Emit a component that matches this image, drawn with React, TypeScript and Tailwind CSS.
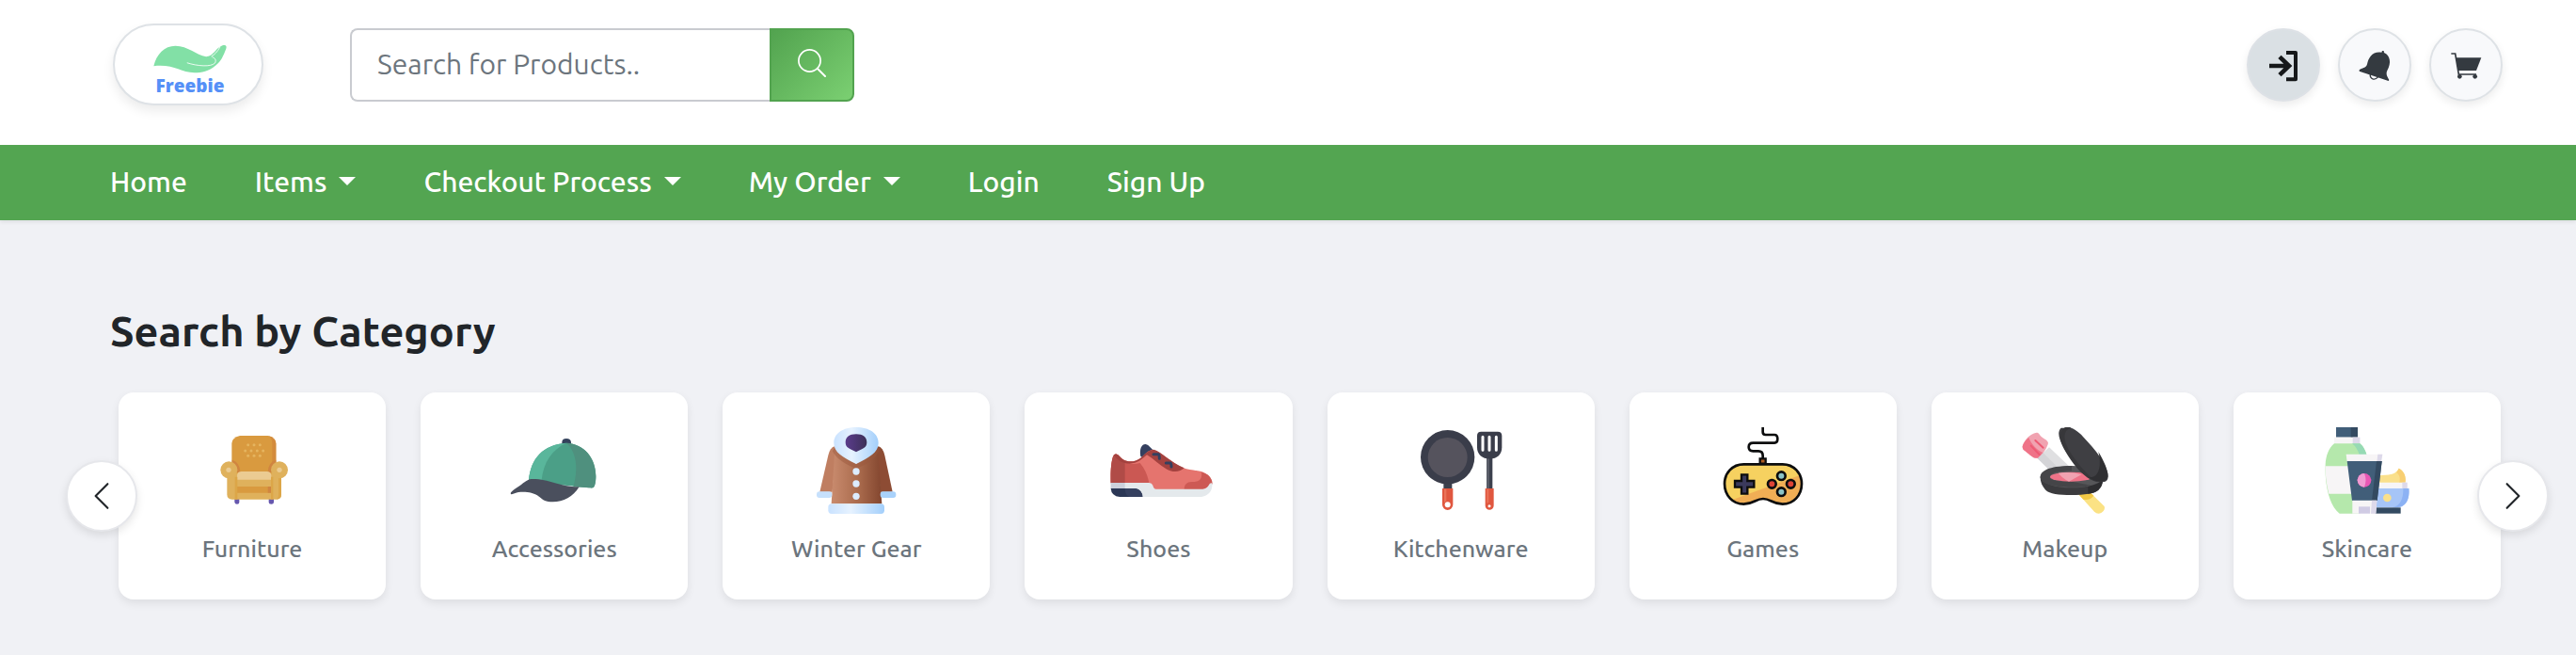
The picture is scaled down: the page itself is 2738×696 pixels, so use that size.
import type { ReactNode } from "react";
import { BsChevronLeft, BsChevronRight } from "react-icons/bs";

const navLinks = [
  { label: "Home", menu: false },
  { label: "Items", menu: true },
  { label: "Checkout Process", menu: true },
  { label: "My Order", menu: true },
  { label: "Login", menu: false },
  { label: "Sign Up", menu: false },
];

function Art({ viewBox, children }: { viewBox: string; children: ReactNode }) {
  return (
    <svg viewBox={viewBox} className="h-[92px] w-[120px]" aria-hidden="true">
      {children}
    </svg>
  );
}

function Armchair() {
  return (
    <Art viewBox="-34 42 360 276">
      <path d="M90 266h15v15q0 6-7 6t-8-6zM199 266h16v15q0 6-8 6t-8-6z" fill="#6657ad" />
      <path d="M107 69h90q25 7 25 24v110H81V93q0-17 26-24z" fill="#d99a3f" />
      <path d="M197 69q25 7 25 24v90h-12V92q0-16-13-23z" fill="#d38b3d" />
      <path d="M82 146q26 8 26 40H82zM222 146q-26 8-26 40h26z" fill="#d08540" />
      <g fill="#e5b45f">
        <circle cx="133" cy="98" r="4.500" /><circle cx="152" cy="98" r="4.500" /><circle cx="171" cy="98" r="4.500" />
        <circle cx="124" cy="117" r="4.500" /><circle cx="143" cy="117" r="4.500" /><circle cx="162" cy="117" r="4.500" /><circle cx="181" cy="117" r="4.500" />
        <circle cx="133" cy="133" r="4.500" /><circle cx="152" cy="133" r="4.500" /><circle cx="171" cy="133" r="4.500" />
      </g>
      <path d="M66 190h173v66q0 16-16 16H82q-16 0-16-16z" fill="#dfb15c" />
      <path d="M98 231h108v20H98z" fill="#d99a3f" />
      <path d="M196 231h10v20h-10z" fill="#d08540" />
      <path d="M98 209v-12q0-14 14-14h81q14 0 14 14v12z" fill="#ebcb92" />
      <path d="M91 200h8v72h-8zM206 200h7v72h-7zM230 200h9v56q0 16-16 16 7-4 7-16z" fill="#dca648" />
      <circle cx="72" cy="178" r="27" fill="#dfb15c" />
      <circle cx="233" cy="178" r="27" fill="#dfb15c" />
      <path d="M82 153a27 27 0 0 1-16 52 27 27 0 0 0 16-52zM243 153a27 27 0 0 1-16 52 27 27 0 0 0 16-52z" fill="#dca648" />
      <circle cx="71" cy="178" r="8" fill="#ebcb92" />
      <circle cx="233" cy="178" r="8" fill="#ebcb92" />
    </Art>
  );
}

function Cap() {
  return (
    <Art viewBox="-1 12 360 276">
      <path d="M204 68v-8q0-12 14-12t15 12v8z" fill="#34425c" />
      <path d="M98 181C104 112 143 67 218 62c57 3 94 48 94 106 0 14-2 28-6 34-3 5-10 3-16 3L98 186z" fill="#4b9f87" />
      <path d="M98 181C104 112 143 67 218 62c-45 20-74 63-79 118l-1 8z" fill="#59b69b" />
      <path d="M218 62c57 3 94 48 94 106 0 14-2 28-6 34-3 5-10 3-16 3l-50-3c16-55 12-110-22-140z" fill="#4f907e" />
      <path d="M40 223c1-8 22-20 35-29 15-11 22-17 36-17 53 0 80 24 148 25-20 32-50 48-84 48-24 0-30-6-44-17-20-15-45-16-66-14-13 2-20 8-23 7z" fill="#4a4f5d" />
    </Art>
  );
}

function Coat() {
  return (
    <Art viewBox="1 42 360 276">
      <defs>
        <linearGradient id="coatBody" x1="0" x2="1"><stop offset="0" stopColor="#c98b6e" /><stop offset="0.55" stopColor="#a96a4c" /><stop offset="1" stopColor="#83462f" /></linearGradient>
        <linearGradient id="coatFur" x1="0" x2="1"><stop offset="0" stopColor="#c9e2ff" /><stop offset="0.4" stopColor="#e6f2ff" /><stop offset="1" stopColor="#a3cffb" /></linearGradient>
        <linearGradient id="coatHood" x1="0" x2="1"><stop offset="0" stopColor="#5b3c8c" /><stop offset="1" stopColor="#3c3058" /></linearGradient>
      </defs>
      <path d="M112 103q-14 4-20 28L65 248h40l14-140z" fill="#bf7e61" />
      <path d="M252 103q14 4 20 28l25 117h-38l-16-140z" fill="#8d4c34" />
      <path d="M113 110l68 48 69-48 13 176H102z" fill="url(#coatBody)" />
      <path d="M106 118q14 32 75 56 56-22 74-56l-6-14-68 54-68-54z" fill="#9a573c" opacity=".45" />
      <rect x="55" y="247" width="49" height="20" rx="9" fill="#c6e0fc" />
      <rect x="258" y="247" width="50" height="20" rx="9" fill="#a9d2fb" />
      <rect x="92" y="286" width="179" height="32" rx="11" fill="url(#coatFur)" />
      <path d="M181 42c42 0 71 20 71 50 0 31-29 45-71 67-42-22-71-36-71-67 0-30 29-50 71-50z" fill="url(#coatFur)" />
      <path d="M181 64c22 0 34 10 34 26 0 18-14 20-34 31-20-11-34-13-34-31 0-16 12-26 34-26z" fill="url(#coatHood)" />
      <g fill="#dcecff"><circle cx="181" cy="183" r="11" /><circle cx="181" cy="222" r="11" /><circle cx="181" cy="262" r="11" /></g>
    </Art>
  );
}

function Shoe() {
  return (
    <Art viewBox="34 12 360 276">
      <path d="M158 105c-5-26 5-40 16-39 12 2 15 14 30 23l-24 28z" fill="#35405f" />
      <path d="M63 190c-1-40 1-65 7-84 3-10 12-11 18-4 22 26 50 22 70 8 15-12 22-25 40-27 25 6 52 38 95 58 24 9 52 8 70 17 15 8 22 20 23 34l-30 24H198z" fill="#e5746e" />
      <path d="M63 190c-1-40 1-65 7-84l20 4c20 20 42 22 66 16 18 22 25 42 29 64l12 16z" fill="#cb5853" />
      <path d="M63 190c-1-40 1-65 7-84 3-10 12-11 18-4l20 20v68z" fill="#b04b47" />
      <path d="M72 100q8-6 16 2c22 26 50 22 70 8 15-12 22-25 42-27 26 8 52 40 97 59-12 12-34 16-55 4-24-13-42-33-64-46-17 14-30 28-55 28-22 0-39-10-51-28z" fill="#a4423f" />
      <path d="M352 155q34 8 35 38l-30 18h-60c0-16 8-25 25-25 22 0 33-6 30-31z" fill="#cd5954" />
      <path d="M63 189h122q9 0 12 8 3 12 10 12h149q14-2 19-12 4-9 11-7c3 28-17 44-42 44H92q-26 0-29-26z" fill="#e4e9ec" />
      <path d="M63 189h45v19H63z" fill="#ccd1dc" />
      <path d="M63 207h78q22 4 23 27H92q-27-2-29-27z" fill="#2b3755" />
      <path d="M108 207h33q22 4 23 27h-42q-14-6-14-27z" fill="#35405f" />
      <path d="M199 98h16q3 0 3 14M239 126h14q3 0 3 12" fill="none" stroke="#35405f" strokeWidth="9" strokeLinecap="round" />
    </Art>
  );
}

function Kitchenware() {
  return (
    <Art viewBox="7 42 360 276">
      <path d="M131 215h27v28h-27zM268 138h19v102h-19z" fill="#3c404d" />
      <path d="M268 140h9v98h-9z" fill="#595c68" />
      <circle cx="144" cy="137" r="86" fill="#3a3d4a" />
      <circle cx="144" cy="138" r="63" fill="#55535d" />
      <path d="M127 237h34v52a17 17 0 0 1-34 0zM264 237h27v55a13.500 13.500 0 0 1-27 0z" fill="#e0573f" />
      <path d="M133 239h7v38q-7 4-7 8zM269 239h6v42l-6 3z" fill="#ea7359" />
      <circle cx="144" cy="289" r="9" fill="#fff" />
      <circle cx="277" cy="293" r="4.500" fill="#fff" />
      <path d="M251 56h53q13 0 13 13v37c0 22-14 37-39 37s-40-15-40-37V69q0-13 13-13z" fill="#3a3d4a" />
      <path d="M256 73v42M277 73v42M299 73v42" stroke="#fff" strokeWidth="9" strokeLinecap="round" />
    </Art>
  );
}

function Gamepad() {
  return (
    <Art viewBox="10 42 360 276">
      <defs><clipPath id="padShape"><path d="M128 160h124c36 0 61 28 61 62 0 38-27 65-61 65-32 0-38-17-62-17s-30 17-62 17c-34 0-61-27-61-65 0-34 25-62 61-62z" /></clipPath></defs>
      <path d="M189 40v17q0 9 9 9h28q10 0 10 13t-10 13h-68q-14 0-14 13t14 13h17q14 0 14 14v12" fill="none" stroke="#0c0d0e" strokeWidth="8" />
      <g clipPath="url(#padShape)">
        <path d="M60 150h260v145H60z" fill="#f6d160" />
        <path d="M68 282L315 192v110H68z" fill="#f0ae55" />
      </g>
      <path d="M128 160h124c36 0 61 28 61 62 0 38-27 65-61 65-32 0-38-17-62-17s-30 17-62 17c-34 0-61-27-61-65 0-34 25-62 61-62z" fill="none" stroke="#0c0d0e" strokeWidth="8" />
      <path d="M180 142h18v16h-18z" fill="#b05c22" stroke="#0c0d0e" strokeWidth="7" />
      <path d="M121 193h19v20h21v20h-21v21h-19v-21h-21v-20h21z" fill="#3b3a5c" stroke="#0c0d0e" strokeWidth="7" />
      <g stroke="#0c0d0e" strokeWidth="8">
        <circle cx="248" cy="197" r="13" fill="#8cc4c6" /><circle cx="248" cy="248" r="13" fill="#8cc4c6" />
        <circle cx="218" cy="223" r="13" fill="#dd4436" /><circle cx="278" cy="223" r="13" fill="#dd4436" />
      </g>
    </Art>
  );
}

function Makeup() {
  return (
    <Art viewBox="13 42 360 276">
      <path d="M104 140l38-34 72 68-34 40z" fill="#dfdfe1" />
      <path d="M104 140l18-18 66 66-16 18z" fill="#d4d4d7" />
      <path d="M57 103c6-20 22-40 45-44 8 0 9 7 16 14 14 10 24 14 20 24-6 18-18 32-32 42-14 3-22-8-32-15-12-10-17-10-17-21z" fill="#f1a3b1" />
      <path d="M57 103q4-16 20-28c8 20 25 40 45 48l-16 17c-14 3-22-8-32-15-12-10-17-10-17-22z" fill="#ef7388" />
      <path d="M84 101l27 28M98 84l25 23" stroke="#ee5a74" strokeWidth="6" strokeLinecap="round" />
      <path d="M236 256l50 55q10 10 22 4 14-8 10-21L269 246z" fill="#fbe284" />
      <path d="M236 256l15 16q22 4 33-12l-15-14z" fill="#f3c945" />
      <path d="M114 200c0 22 10 34 17 42 12 12 42 16 82 16 42 0 74-5 86-16 9-9 14-20 15-38z" fill="#3b3b3e" />
      <path d="M266 228q36-2 48-20c-2 18-6 26-15 34-8 7-20 10-33 12z" fill="#2d2d30" />
      <ellipse cx="214" cy="200" rx="100" ry="35" fill="#565659" />
      <path d="M114 200c2-24 40-35 100-35v16c-40 0-68 6-70 20 2 14 40 14 70 14l60 12c-30 10-158 12-160-27z" fill="#454548" />
      <ellipse cx="212" cy="200" rx="67" ry="15" fill="#ef7388" />
      <path d="M171 188q40-6 74 5l-40 22q-18-8-34-27z" fill="#f1a3b1" />
      <path d="M190 44c18-6 38 4 62 30 40 42 70 82 77 114 4 26-6 30-24 28-24 2-56-24-84-60-34-46-62-92-41-112z" fill="#3f3f43" />
      <path d="M190 44c8-4 18-3 23-1-40 14-20 62 20 112 24 30 47 55 67 61-24 0-54-24-80-58-34-46-60-94-30-114z" fill="#37373a" />
      <path d="M299 120c18 30 32 60 30 80-8 22-36 18-60 2 30 2 42-34 30-82z" fill="#2f2f32" />
    </Art>
  );
}

function Skincare() {
  return (
    <Art viewBox="46 162 360 276">
      <path d="M127 162h69v32h-69z" fill="#415e79" />
      <path d="M174 162h22v32h-22z" fill="#334a61" />
      <path d="M121 194h82v21h-82z" fill="#f7f5f6" />
      <path d="M180 194h23v21h-23z" fill="#ddd9ea" />
      <path d="M121 214h82c30 25 32 80 17 140l-16 83h-66c-35-26-48-100-45-157 2-28 10-50 28-66z" fill="#b5e8ac" />
      <path d="M178 214h25q15 12 22 38h-23q-8-26-24-38z" fill="#96dab4" />
      <path d="M93 286h90v88h-79q-12-45-11-88z" fill="#f7f5f6" />
      <path d="M258 316c38-2 58-2 69-23 20 10 24 30 20 48h-89z" fill="#fae08b" />
      <path d="M327 293c20 10 24 30 20 48h-19c4-16 3-24-8-34z" fill="#f8cf72" />
      <path d="M252 338h102v20H252z" fill="#f7f5f6" />
      <path d="M338 338h16v20h-16z" fill="#ddd9ea" />
      <path d="M250 357h109c3 32-7 60-40 61h-69z" fill="#a6c5f7" />
      <path d="M341 357h18c3 32-7 60-40 61h-14c28-4 37-30 36-61z" fill="#8cb2f4" />
      <path d="M250 418h83v19h-83z" fill="#334a61" />
      <circle cx="290" cy="387" r="13" fill="#fae08b" />
      <path d="M159 248h116l-4 24H162z" fill="#f7f5f6" />
      <path d="M260 248h15l-4 24h-14z" fill="#ddd9ea" />
      <path d="M162 270h111l-15 126h-80z" fill="#415e79" />
      <path d="M256 270h17l-15 126h-17z" fill="#334a61" />
      <path d="M179 395h78l-3 42h-75z" fill="#f7f5f6" />
      <path d="M241 395h16l-3 42h-16z" fill="#ddd9ea" />
      <path d="M199 415h36v22h-36z" fill="#d0cbe4" />
      <circle cx="217" cy="331" r="22" fill="#e857b4" />
      <path d="M217 309q9 22 0 44a22 22 0 0 1 0-44z" fill="#f09bd2" />
    </Art>
  );
}

const categories = [
  { name: "Furniture", Icon: Armchair },
  { name: "Accessories", Icon: Cap },
  { name: "Winter Gear", Icon: Coat },
  { name: "Shoes", Icon: Shoe },
  { name: "Kitchenware", Icon: Kitchenware },
  { name: "Games", Icon: Gamepad },
  { name: "Makeup", Icon: Makeup },
  { name: "Skincare", Icon: Skincare },
];

function Logo() {
  return (
    <a
      href="#"
      className="flex h-[87px] w-40 flex-col items-center rounded-[44px] border-2 border-[#dee2e6] bg-white pt-5 pl-1 shadow-[0_6px_12px_rgba(0,0,0,0.08)]"
    >
      <svg viewBox="160 98 236 92" className="h-[31px] w-[79px]" aria-hidden="true">
        <path
          d="M161 167C170 130 195 103 230 103C270 103 295 132 328 137C350 134 356 112 378 102C390 98 394 103 391 112C382 135 375 152 358 165C335 184 315 188 290 188C245 187 225 160 161 167Z"
          fill="#82e0a6"
        />
        <path d="M268 157c30 10 76 14 88 0 4-9 1-15-8-18M345 136c10-6 18-14 26-28M336 134c10-4 18-12 26-25" fill="none" stroke="#fff" strokeWidth="2.500" strokeLinecap="round" />
      </svg>
      <span className="font-['Open_Sans','Noto_Sans',sans-serif] text-[19px] leading-[26px] font-extrabold text-[#5590f7]">Freebie</span>
    </a>
  );
}

function RoundButton({ label, dark, children }: { label: string; dark?: boolean; children: ReactNode }) {
  return (
    <button
      type="button"
      aria-label={label}
      className={`flex size-[78px] items-center justify-center rounded-full border-2 shadow-[0_4px_10px_rgba(0,0,0,0.08)] ${dark ? "border-[#dde1e6] bg-[#dae0e4]" : "border-[#dee2e6] bg-[#f8f9fb]"}`}
    >
      {children}
    </button>
  );
}

export default function App() {
  return (
    <div className="min-h-screen bg-[#f0f1f5] font-[Ubuntu,'Open_Sans',sans-serif] text-[#212529]">
      <header className="flex items-center bg-white pt-[25px] pr-[78px] pb-[42px] pl-[120px]">
        <Logo />
        <form className="ml-[92px] flex h-[78px] w-[536px]" role="search">
          <input
            type="text"
            aria-label="Search for products"
            placeholder="Search for Products.."
            className="min-w-0 flex-1 rounded-l-lg border-2 border-r-0 border-[#c9cbd0] bg-white pl-[27px] text-[30px] outline-none placeholder:text-[#6c757d]"
          />
          <button
            type="button"
            aria-label="Search"
            className="flex w-[90px] items-center justify-center rounded-r-lg border-2 border-[#52a34f] bg-linear-135 from-[#52a34f] to-[#7bd072] pb-1 text-white"
          >
            <svg viewBox="0 0 30 30" className="size-[30px]" fill="none" stroke="currentColor" strokeLinecap="round" aria-hidden="true">
              <circle cx="12.500" cy="12.500" r="11.600" strokeWidth="1.700" />
              <path d="M21 21l8 8" strokeWidth="2" />
            </svg>
          </button>
        </form>
        <div className="ml-auto flex gap-[19px]">
          <RoundButton label="Log in" dark>
            <svg viewBox="204 147 120 120" className="size-10" fill="#16181a" aria-hidden="true">
              <path d="M273 162h30q6 0 6 6v85q0 6-6 6h-30v-12h24v-73h-24z" />
              <path d="M219 210h60M252 181l30 29-30 29" fill="none" stroke="#16181a" strokeWidth="14" />
            </svg>
          </RoundButton>
          <RoundButton label="Notifications">
            <svg viewBox="493 147 120 120" className="size-10" fill="#343a40" aria-hidden="true">
              <path d="M575 167c-28-5-42 16-46 38-4 13-16 12-25 18v4l93 31q3-2 1-5c-5-9-10-17-5-28 14-24 10-48-10-57l-1-6h-5z" />
              <path d="M539 236c-2 16 14 22 25 9" fill="none" stroke="#343a40" strokeWidth="4" />
            </svg>
          </RoundButton>
          <RoundButton label="Cart">
            <svg viewBox="782 147 120 120" className="size-10" fill="#343a40" aria-hidden="true">
              <path d="M810 184h81l-16 41h-57z" />
              <path d="M795 171h13l11 66h56" fill="none" stroke="#343a40" strokeWidth="5" />
              <circle cx="822" cy="244" r="7" />
              <circle cx="871" cy="244" r="7" />
            </svg>
          </RoundButton>
        </div>
      </header>

      <nav className="flex h-20 items-center gap-[72px] bg-[#53a551] pr-[78px] pb-0.5 pl-[117px] shadow-[0_2px_4px_rgba(0,0,0,0.08)]">
        {navLinks.map(({ label, menu }) => (
          <a key={label} href="#" className="flex items-center gap-[13px] text-[30px] leading-10 font-medium text-white">
            {label}
            {menu && (
              <svg viewBox="0 0 18 9" className="mb-0.5 h-[9px] w-[18px]" fill="currentColor" aria-hidden="true">
                <path d="M0 0h18L9 9z" />
              </svg>
            )}
          </a>
        ))}
      </nav>

      <main className="pt-[90px]">
        <h2 className="pl-[117px] text-[45px] leading-[56px] font-semibold">Search by Category</h2>
        <div className="relative mt-[37px] pr-20 pl-[126px]">
          <ul className="grid grid-cols-8 gap-[37px]">
            {categories.map(({ name, Icon }) => (
              <li key={name}>
                <a
                  href="#"
                  className="flex flex-col items-center rounded-2xl bg-white pt-[37px] pb-9 shadow-[0_4px_10px_rgba(0,0,0,0.08)]"
                >
                  <Icon />
                  <span className="mt-[19px] text-[25px] leading-9 font-medium text-[#6c757d]">{name}</span>
                </a>
              </li>
            ))}
          </ul>
          <button
            type="button"
            aria-label="Previous"
            className="absolute top-1/2 left-[70px] flex size-[76px] -translate-y-1/2 items-center justify-center rounded-full border-2 border-[#e6e7eb] bg-white shadow-[0_4px_10px_rgba(0,0,0,0.1)]"
          >
            <BsChevronLeft className="size-[34px]" />
          </button>
          <button
            type="button"
            aria-label="Next"
            className="absolute top-1/2 right-[29px] flex size-[76px] -translate-y-1/2 items-center justify-center rounded-full border-2 border-[#e6e7eb] bg-white shadow-[0_4px_10px_rgba(0,0,0,0.1)]"
          >
            <BsChevronRight className="size-[34px]" />
          </button>
        </div>
      </main>
    </div>
  );
}
